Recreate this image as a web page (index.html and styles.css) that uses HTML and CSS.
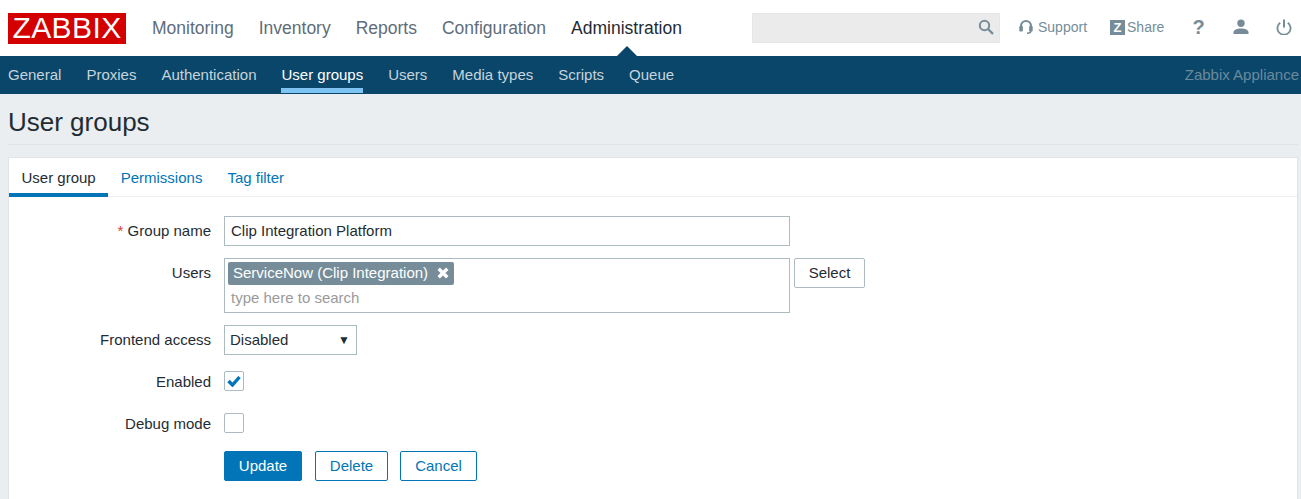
FILE: index.html
```html
<!DOCTYPE html>
<html lang="en">
<head>
<meta charset="utf-8">
<title>User groups</title>
<link rel="stylesheet" href="styles.css">
</head>
<body>
<header class="topbar">
  <div class="logo">ZABBIX</div>
  <nav class="mainnav">
    <a>Monitoring</a><a>Inventory</a><a>Reports</a><a>Configuration</a><a class="active">Administration</a>
  </nav>
  <div class="search">
    <svg class="search-icon" viewBox="0 0 16 16" width="16" height="16"><circle cx="6.5" cy="6.5" r="4.7" fill="none" stroke="#768d99" stroke-width="2"/><path d="M10 10l5 5" stroke="#768d99" stroke-width="2.4"/></svg>
  </div>
  <div class="tools">
    <a class="tool support"><svg viewBox="0 0 14 16" width="14" height="16"><path d="M2 9V7a5 5 0 0 1 10 0v2" fill="none" stroke="#768d99" stroke-width="2.2"/><rect x="0.3" y="7" width="3.6" height="5.4" rx="1.2" fill="#768d99"/><rect x="10.1" y="7" width="3.6" height="5.4" rx="1.2" fill="#768d99"/><path d="M12 11.5c0 1.8-1.5 2.7-4 2.7" fill="none" stroke="#768d99" stroke-width="1.6"/></svg>Support</a>
    <a class="tool share"><span class="zbox">Z</span>Share</a>
    <a class="help">?</a>
    <a class="icon-btn"><svg viewBox="0 0 16 16" width="16" height="16"><circle cx="8" cy="4.2" r="3.7" fill="#768d99"/><path d="M0.5 15v-1.6c0-2.6 3.6-4 7.5-4s7.5 1.4 7.5 4V15z" fill="#768d99"/></svg></a>
    <a class="icon-btn"><svg viewBox="0 0 16 16" width="16" height="16"><path d="M8 0.5v8" stroke="#768d99" stroke-width="2" fill="none"/><path d="M4.2 3.2a6.6 6.6 0 1 0 7.6 0" stroke="#768d99" stroke-width="1.8" fill="none" transform="translate(0 0.5)"/></svg></a>
  </div>
</header>
<nav class="subnav">
  <a>General</a><a>Proxies</a><a>Authentication</a><a class="current">User groups</a><a>Users</a><a>Media types</a><a>Scripts</a><a>Queue</a>
  <span class="server">Zabbix Appliance</span>
</nav>
<main class="page">
  <h1 class="title">User groups</h1>
  <section class="card">
    <div class="tabs">
      <a class="tab selected">User group</a><a class="tab">Permissions</a><a class="tab">Tag filter</a>
    </div>
    <form class="form">
      <div class="row r-name">
        <label class="lbl"><span class="req">*</span> Group name</label>
        <div class="input wide">Clip Integration Platform</div>
      </div>
      <div class="row r-users">
        <label class="lbl">Users</label>
        <div class="multi">
          <span class="chip">ServiceNow (Clip Integration)<svg class="chip-x" viewBox="0 0 12 12" width="12" height="12"><path d="M1.7 1.7l8.6 8.6M10.3 1.7l-8.6 8.6" stroke="#fff" stroke-width="3.4"/></svg></span>
          <div class="placeholder">type here to search</div>
        </div>
        <button type="button" class="btn-select">Select</button>
      </div>
      <div class="row r-select">
        <label class="lbl">Frontend access</label>
        <div class="select">Disabled<span class="caret">▼</span></div>
      </div>
      <div class="row r-check">
        <label class="lbl">Enabled</label>
        <span class="check"><svg viewBox="0 0 14 12" width="14" height="12"><path d="M1.5 6l4 4 7-8" fill="none" stroke="#0275b8" stroke-width="3.4"/></svg></span>
      </div>
      <div class="row r-check2">
        <label class="lbl">Debug mode</label>
        <span class="check"></span>
      </div>
      <div class="row r-btns">
        <span class="lbl"></span>
        <div class="btns">
          <button type="button" class="btn primary">Update</button>
          <button type="button" class="btn outline b-del">Delete</button>
          <button type="button" class="btn outline b-can">Cancel</button>
        </div>
      </div>
    </form>
  </section>
</main>
</body>
</html>
```

FILE: styles.css
```css
* { box-sizing: border-box; }
html, body { margin: 0; padding: 0; height: 499px; overflow: hidden; }
body { font-family: "Liberation Sans", Arial, sans-serif; font-size: 14px; color: #1f2c33; background: #ebeef0; }

.topbar { height: 56px; background: #fff; display: flex; align-items: flex-start; position: relative; }
.logo { flex: none; width: 118px; height: 31px; margin: 13px 0 0 8px; background: #d40000; color: #fff; font-size: 30px; line-height: 30px; text-align: center; letter-spacing: 0.4px; white-space: nowrap; }
.mainnav { flex: none; display: flex; gap: 25px; margin-left: 26px; font-size: 17.5px; line-height: 56px; color: #5f6d78; }
.mainnav a { position: relative; display: block; }
.mainnav .active { color: #1f2c33; }
.mainnav .active::after { content: ""; position: absolute; left: 50%; bottom: 0; margin-left: -10px; border: 10px solid transparent; border-top: 0; border-bottom-color: #0a466a; }

.search { flex: none; width: 248px; height: 30px; margin: 13px 0 0 70px; background: #ebebeb; border: 1px solid #e6e6e6; position: relative; }
.search-icon { position: absolute; right: 5px; top: 5px; }

.tools { flex: none; display: flex; align-items: center; height: 30px; margin-top: 12px; color: #768d99; }
.tool { display: flex; align-items: center; white-space: nowrap; }
.support { margin-left: 19px; gap: 5px; }
.share { margin-left: 23px; gap: 2px; }
.zbox { width: 15px; height: 15px; background: #768d99; color: #fff; font-weight: 700; font-size: 13px; line-height: 15px; text-align: center; }
.help { margin-left: 28px; width: 12px; text-align: center; font-size: 20px; font-weight: 700; line-height: 30px; }
.icon-btn { display: flex; margin-left: 29px; }
.icon-btn + .icon-btn { margin-left: 27px; }

.subnav { height: 38px; background: #0a466a; display: flex; align-items: flex-start; padding-left: 8px; gap: 25px; font-size: 15px; line-height: 37px; color: #c6d4dc; position: relative; }
.subnav a { display: block; height: 37px; white-space: nowrap; }
.subnav .current { color: #fff; border-bottom: 5px solid #7dc4f2; }
.server { margin-left: auto; padding-right: 2px; color: #6a8a9c; }

.page { padding: 0 3px 0 8px; }
.title { margin: 0; height: 51px; font-size: 26px; font-weight: 400; line-height: 56px; color: #1f2c33; border-bottom: 1px solid #dfe4e7; }
.card { margin-top: 12px; height: 360px; background: #fff; border: 1px solid #dfe4e7; border-bottom: 0; }
.tabs { height: 39px; display: flex; border-bottom: 1px solid #ebeef0; }
.tab { display: block; height: 39px; padding: 0 12.5px; line-height: 40px; font-size: 15px; color: #0275b8; white-space: nowrap; }
.tab.selected { color: #1f2c33; border-bottom: 4px solid #0275b8; }

.form { padding-top: 19px; }
.row { display: flex; align-items: flex-start; }
.lbl { width: 202px; margin-right: 13px; flex: none; text-align: right; font-size: 15px; line-height: 30px; color: #1f2c33; }
.req { color: #e33734; }
.r-name { height: 42px; }
.r-users { height: 67px; }
.r-select { height: 46px; }
.r-check { height: 42px; }
.r-check .lbl, .r-check2 .lbl { line-height: 22px; }
.r-check2 { height: 38px; }

.input, .multi, .select { border: 1px solid #acbbc2; background: #fff; font-size: 15px; }
.input.wide { width: 566px; height: 30px; line-height: 28px; padding-left: 6px; }
.multi { width: 566px; height: 55px; padding: 3px; }
.chip { display: inline-flex; align-items: center; height: 23px; padding: 0 5px 2px 5px; background: #768d99; color: #fff; border-radius: 2px; line-height: 21px; white-space: nowrap; }
.chip-x { margin-left: 9px; }
.placeholder { color: #9a9a9a; line-height: 24px; padding-left: 3px; margin-top: 1px; }
.btn-select { margin-left: 4px; width: 71px; height: 30px; background: #fff; border: 1px solid #acbbc2; border-radius: 2px; font: 15px "Liberation Sans", Arial, sans-serif; color: #1f2c33; padding: 0 0 2px; }

.select { width: 133px; height: 30px; line-height: 28px; padding-left: 5px; display: flex; justify-content: space-between; padding-right: 6px; }
.caret { font-size: 12px; color: #1f2c33; }
.check { display: flex; align-items: center; justify-content: center; width: 20px; height: 20px; border: 1px solid #acbbc2; border-radius: 2px; background: #fff; }

.btns { display: flex; }
.btn { height: 30px; padding: 0 0 2px; border-radius: 2px; border: 1px solid #0275b8; font: 15px "Liberation Sans", Arial, sans-serif; }
.primary { width: 78px; background: #0275b8; color: #fff; }
.outline { background: #fff; color: #0275b8; }
.b-del { width: 73px; margin-left: 13px; }
.b-can { width: 77px; margin-left: 12px; }
```
